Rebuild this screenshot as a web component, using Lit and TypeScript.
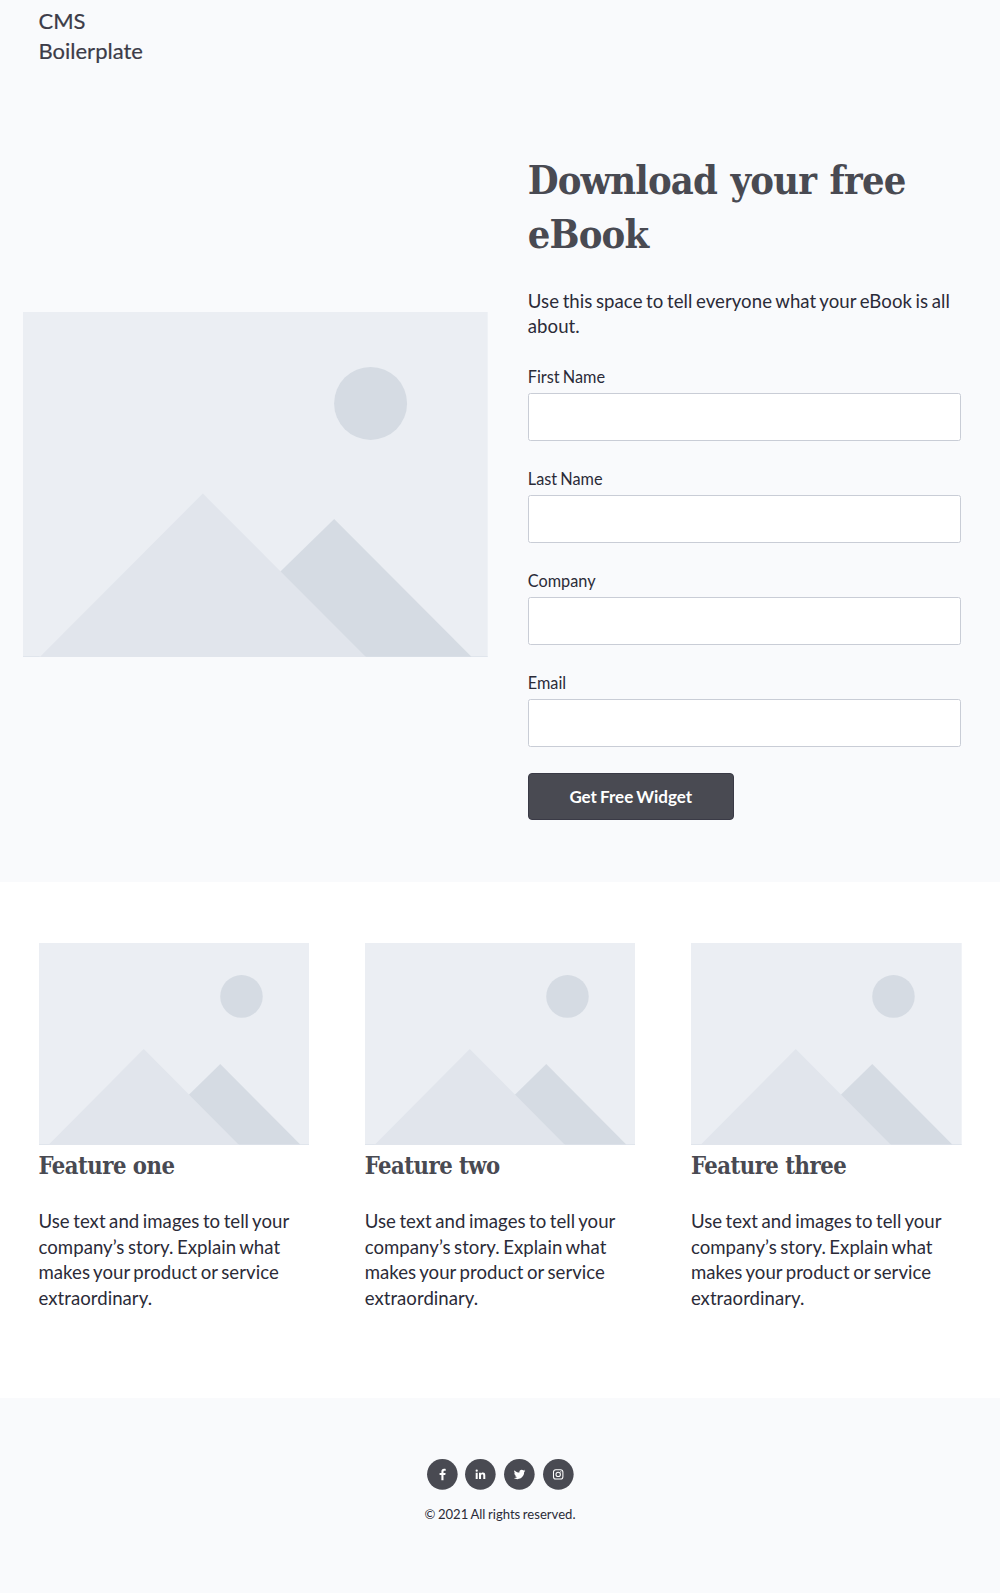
import { LitElement, html, css, svg } from "lit";
import { customElement } from "lit/decorators.js";

@customElement("placeholder-image")
class PlaceholderImage extends LitElement {
  static styles = css`
    :host { display: block; }
    .art { display: block; width: 100%; height: 100%; }
  `;

  render() {
    return html`
      <svg class="art" viewBox="0 0 464.7 345.6" preserveAspectRatio="none" aria-hidden="true">
        <rect width="464.7" height="345.6" fill="#ebeef3" />
        <circle cx="347.6" cy="91.4" r="36.5" fill="#d5dbe3" />
        <path d="M311.2 207 L448.5 344.8 H170 Z" fill="#d5dbe3" />
        <path d="M179.8 181.5 L343.5 345.6 H16.2 Z" fill="#e1e5ec" />
        <path d="M0 344.6H16.8V345.6H0Z M343 344.6H464.7V345.6H343Z" fill="#d6dce5" />
      </svg>
    `;
  }
}

const icons = [
  {
    name: "Facebook",
    shape: svg`<path fill="#fff" d="M16.5 21.200v-5.100h1.800l.3-2.100h-2.100v-1.200c0-.6.3-1.050 1.100-1.050h1.100v-1.850c-.2 0-.9-.1-1.600-.1-1.700 0-2.700 1-2.700 2.700v1.500h-1.800v2.100h1.800v5.100z" />`,
  },
  {
    name: "LinkedIn",
    shape: svg`<g fill="#fff"><circle cx="11.700" cy="11.700" r="1.150" /><path d="M10.700 13.700h2V20h-2zM14 13.700h1.900v.9c.3-.6 1-1.050 2-1.050 2 0 2.400 1.300 2.400 3V20h-2v-3.100c0-.8 0-1.700-1.050-1.700s-1.200.8-1.200 1.650V20H14z" /></g>`,
  },
  {
    name: "Twitter",
    shape: svg`<path fill="#fff" transform="translate(9.700 9.600) scale(.485)" d="M23.950 4.570a10 10 0 0 1-2.820.77 4.960 4.960 0 0 0 2.160-2.720c-.950.550-2 .950-3.130 1.180a4.920 4.920 0 0 0-8.380 4.480C7.690 8.090 4.070 6.130 1.640 3.160a4.920 4.920 0 0 0 1.520 6.570 4.900 4.900 0 0 1-2.230-.61v.06a4.920 4.920 0 0 0 3.950 4.830 5 5 0 0 1-2.210.08 4.940 4.940 0 0 0 4.600 3.420A9.870 9.870 0 0 1 0 19.540a13.990 13.990 0 0 0 7.550 2.210c9.050 0 14-7.500 14-13.980 0-.210 0-.420-.020-.630a9.940 9.940 0 0 0 2.420-2.570z" />`,
  },
  {
    name: "Instagram",
    shape: svg`<g fill="none" stroke="#fff"><rect x="10.500" y="10.700" width="9.400" height="9.400" rx="2.400" stroke-width="1.050" /><circle cx="15.200" cy="15.400" r="2.200" stroke-width="1.050" /></g><circle cx="17.750" cy="12.850" r=".65" fill="#fff" />`,
  },
];

@customElement("app-root")
class AppRoot extends LitElement {
  static styles = css`
    :host {
      display: block;
      font-family: Lato, "Liberation Sans", sans-serif;
      color: #2b2b38;
      background: #fff;
    }
    * { box-sizing: border-box; }
    h1, h2, p { margin: 0; }
    .page { height: 1593px; overflow: hidden; display: flex; flex-direction: column; }
    .top { background: #f9fafc; height: 881.5px; flex: none; }
    .brand {
      height: 160px;
      padding: 5.500px 0 0 38.500px;
      width: 170px;
      font-size: 22px;
      line-height: 30px;
      color: #3c3c48;
      -webkit-text-stroke: .2px;
    }
    .hero { display: grid; grid-template-columns: 464.7px 433.500px; column-gap: 40.100px; padding-left: 23px; }
    .hero-image { height: 345.6px; margin-top: 151.500px; }
    h1, h2 {
      font-family: "DejaVu Serif Condensed", "DejaVu Serif", serif;
      font-stretch: condensed;
      font-weight: 700;
      color: #494a52;
    }
    .title { font-size: 39.500px; line-height: 54px; height: 108px; letter-spacing: -.850px; word-spacing: 2px; margin-top: -7px; white-space: nowrap; }
    .lead {
      font-size: 18.600px;
      line-height: 25.500px;
      height: 51px;
      margin-top: 27.500px;
      letter-spacing: .050px;
      word-spacing: -1.200px;
      white-space: nowrap;
    }
    .field { display: flex; flex-direction: column; height: 102px; }
    .fields { margin-top: 23px; }
    .label { font-size: 16.300px; line-height: 24px; height: 30.700px; padding-top: 2.500px; word-spacing: -1px; }
    .input {
      width: 100%;
      height: 47.500px;
      border: 1px solid #c9cdd6;
      border-radius: 2.500px;
      background: #fff;
      padding: 0 12px;
      outline: none;
      font: inherit;
    }
    .submit {
      display: block;
      width: 206px;
      height: 47.500px;
      margin-top: 2px;
      border: 1px solid #3a3a46;
      border-radius: 4px;
      background: #494a52;
      color: #fff;
      font: 700 17px Lato, "Liberation Sans", sans-serif;
      word-spacing: -1px;
      padding: 0;
    }
    .features {
      height: 516px;
      flex: none;
      padding: 61.500px 38.500px 0;
      display: grid;
      grid-template-columns: repeat(3, 270.700px);
      column-gap: 55.500px;
    }
    .feature-image { height: 202px; }
    .feature-title { font-size: 23.600px; line-height: 32px; margin-top: 5px; letter-spacing: -.500px; white-space: nowrap; }
    .feature-text {
      font-size: 18.600px;
      line-height: 25.450px;
      margin-top: 27.200px;
      letter-spacing: .040px;
      word-spacing: -1.300px;
      white-space: nowrap;
    }
    .footer { flex: 1; background: #f9fafc; padding-top: 61.700px; display: flex; flex-direction: column; align-items: center; }
    .social { display: flex; gap: 7.900px; }
    .badge { display: block; width: 30.700px; height: 30.700px; overflow: visible; }
    .legal { font-size: 13.100px; line-height: 18px; margin-top: 15.300px; word-spacing: -.800px; }
  `;

  render() {
    return html`
      <div class="page">
        <section class="top">
          <header class="brand">CMS<br />Boilerplate</header>
          <div class="hero">
            <placeholder-image class="hero-image"></placeholder-image>
            <div>
              <h1 class="title">Download your free<br />eBook</h1>
              <p class="lead">Use this space to tell everyone what your eBook is all<br />about.</p>
              <form class="fields">
                ${["First Name", "Last Name", "Company", "Email"].map(
                  (label) => html`<label class="field"><span class="label">${label}</span><input class="input" /></label>`
                )}
                <button class="submit" type="button">Get Free Widget</button>
              </form>
            </div>
          </div>
        </section>
        <section class="features">
          ${["one", "two", "three"].map(
            (n) => html`
              <article>
                <placeholder-image class="feature-image"></placeholder-image>
                <h2 class="feature-title">Feature ${n}</h2>
                <p class="feature-text">
                  Use text and images to tell your<br />company’s story. Explain what<br />makes your product or service<br />extraordinary.
                </p>
              </article>
            `
          )}
        </section>
        <footer class="footer">
          <div class="social">
            ${icons.map(
              (icon) => html`
                <svg class="badge" viewBox="0 0 30.7 30.7" role="img" aria-label=${icon.name}>
                  <circle cx="15.35" cy="15.35" r="15.3" fill="#494a52" />
                  ${icon.shape}
                </svg>
              `
            )}
          </div>
          <p class="legal">© 2021 All rights reserved.</p>
        </footer>
      </div>
    `;
  }
}
